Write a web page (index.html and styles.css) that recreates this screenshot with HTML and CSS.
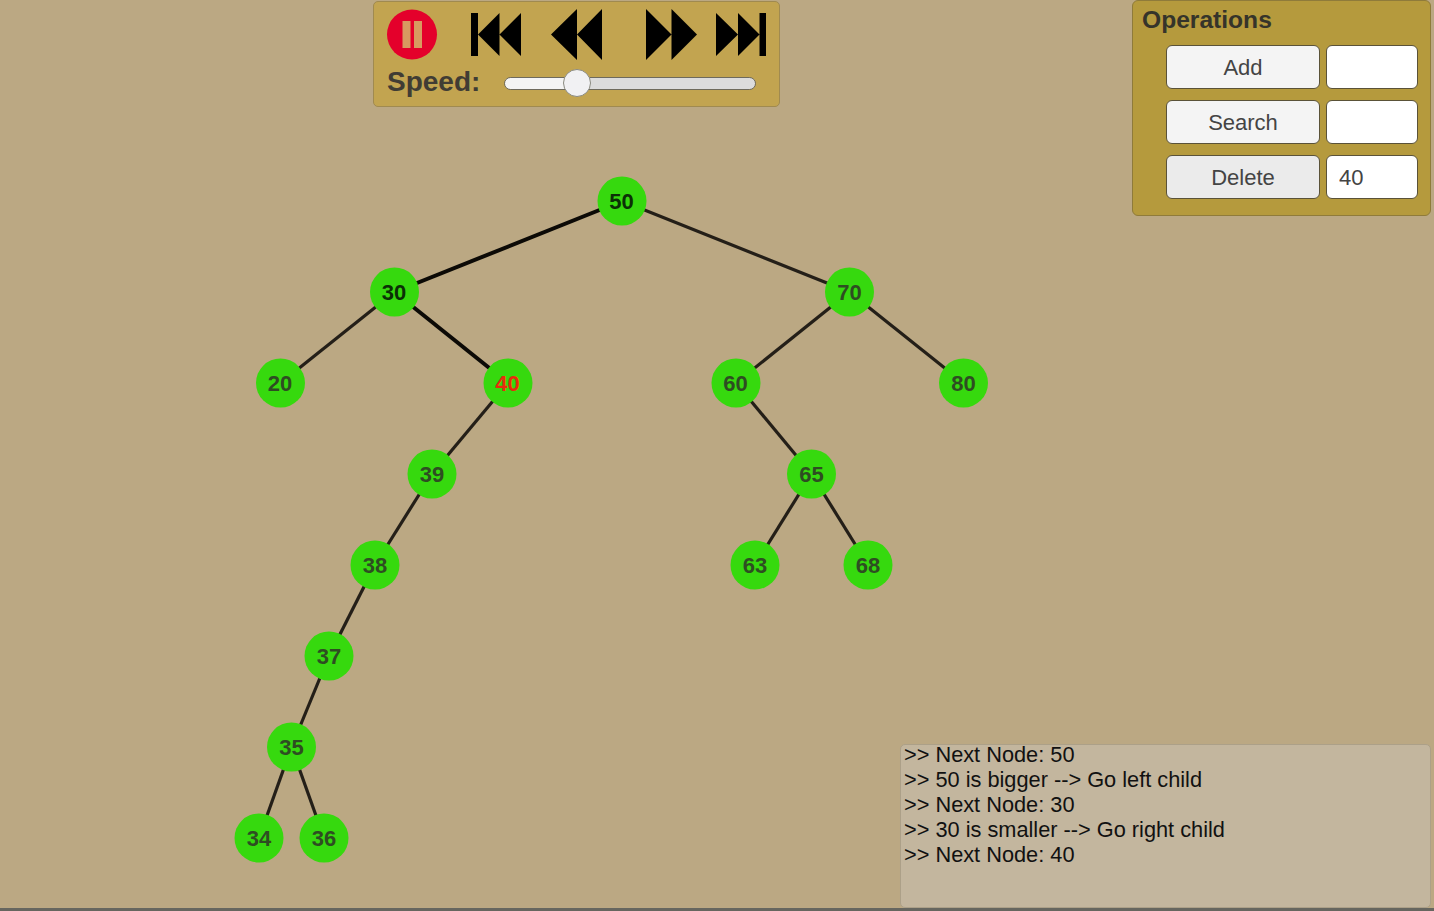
FILE: index.html
```html
<!DOCTYPE html>
<html lang="en">
<head>
    <meta charset="UTF-8">
    <meta name="viewport" content="width=device-width, initial-scale=1.0">
    <title>Binary Search Tree</title>
    <link rel="stylesheet" href="styles.css">
</head>
<body>
    <!-- Tree canvas, sits behind the panels -->
    <svg class="tree" width="1434" height="911" viewBox="0 0 1434 911">
        <g class="edges">
            <line class="edge-dark" x1="622" y1="201" x2="394.5" y2="292"/>
            <line class="edge-dark" x1="394.5" y1="292" x2="508" y2="383"/>
            <line x1="622" y1="201" x2="849.5" y2="292"/>
            <line x1="394.5" y1="292" x2="280.5" y2="383"/>
            <line x1="849.5" y1="292" x2="736" y2="383"/>
            <line x1="849.5" y1="292" x2="963.5" y2="383"/>
            <line x1="508" y1="383" x2="432" y2="474"/>
            <line x1="736" y1="383" x2="811.5" y2="474"/>
            <line x1="432" y1="474" x2="375" y2="565"/>
            <line x1="811.5" y1="474" x2="755" y2="565"/>
            <line x1="811.5" y1="474" x2="868" y2="565"/>
            <line x1="375" y1="565" x2="329" y2="656"/>
            <line x1="329" y1="656" x2="291.5" y2="747"/>
            <line x1="291.5" y1="747" x2="259" y2="838"/>
            <line x1="291.5" y1="747" x2="324" y2="838"/>
        </g>
        <g class="nodes">
            <circle cx="622" cy="201" r="24.5"/>
            <circle cx="394.5" cy="292" r="24.5"/>
            <circle cx="849.5" cy="292" r="24.5"/>
            <circle cx="280.5" cy="383" r="24.5"/>
            <circle cx="508" cy="383" r="24.5"/>
            <circle cx="736" cy="383" r="24.5"/>
            <circle cx="963.5" cy="383" r="24.5"/>
            <circle cx="432" cy="474" r="24.5"/>
            <circle cx="811.5" cy="474" r="24.5"/>
            <circle cx="375" cy="565" r="24.5"/>
            <circle cx="755" cy="565" r="24.5"/>
            <circle cx="868" cy="565" r="24.5"/>
            <circle cx="329" cy="656" r="24.5"/>
            <circle cx="291.5" cy="747" r="24.5"/>
            <circle cx="259" cy="838" r="24.5"/>
            <circle cx="324" cy="838" r="24.5"/>
        </g>
        <g class="labels">
            <text class="visited" x="621.5" y="209">50</text>
            <text class="visited" x="394" y="300">30</text>
            <text x="849.5" y="300">70</text>
            <text x="280" y="391">20</text>
            <text class="current" x="507.5" y="391">40</text>
            <text x="735.5" y="391">60</text>
            <text x="963.5" y="391">80</text>
            <text x="432" y="482">39</text>
            <text x="811.5" y="482">65</text>
            <text x="375" y="573">38</text>
            <text x="755" y="573">63</text>
            <text x="868" y="573">68</text>
            <text x="329" y="664">37</text>
            <text x="291.5" y="755">35</text>
            <text x="259" y="846">34</text>
            <text x="324" y="846">36</text>
        </g>
    </svg>

    <div class="top-row">
        <div class="player">
            <div class="player-icons">
                <svg width="394" height="60" viewBox="387 6 394 60">
                    <circle class="pause-bg" cx="412" cy="34.5" r="25"/>
                    <rect class="pause-bar" x="402.5" y="21" width="8" height="27"/>
                    <rect class="pause-bar" x="414" y="21" width="8" height="27"/>
                    <path d="M471 13h7v43h-7z M478 34.5 L499.5 13V56z M499.5 34.5 L521 13V56z"/>
                    <path d="M551 34.5 L577 9V60z M577 34.5 L602 9V60z"/>
                    <path d="M646 9 L671.5 34.5 L646 60z M671.5 9 L697 34.5 L671.5 60z"/>
                    <path d="M716 13 L738 34.5 L716 56z M738 13 L759.5 34.5 L738 56z M759.5 13h6.5v43h-6.5z"/>
                </svg>
            </div>
            <div class="speed-row">
                <span class="speed-label">Speed:</span>
                <input class="speed-slider" type="range" min="0" max="100" step="0.1" value="26">
            </div>
        </div>

        <div class="operations">
            <h2>Operations</h2>
            <div class="op-grid">
                <button>Add</button>
                <input type="text">
                <button>Search</button>
                <input type="text">
                <button class="pressed">Delete</button>
                <input type="text" value="40">
            </div>
        </div>
    </div>

    <div class="bottom-row">
        <div class="log">
            <div>&gt;&gt; Next Node: 50</div>
            <div>&gt;&gt; 50 is bigger --&gt; Go left child</div>
            <div>&gt;&gt; Next Node: 30</div>
            <div>&gt;&gt; 30 is smaller --&gt; Go right child</div>
            <div>&gt;&gt; Next Node: 40</div>
        </div>
    </div>
</body>
</html>
```
FILE: styles.css
```css
body {
    margin: 0;
    box-sizing: border-box;
    height: 911px;
    padding: 0 3px 0 0;
    overflow: hidden;
    position: relative;
    display: flex;
    flex-direction: column;
    justify-content: space-between;
    font-family: "Liberation Sans", Arial, sans-serif;
    background: #bba883;
    border-bottom: 3px solid #66665f;
}

.tree {
    position: absolute;
    top: 0;
    left: 0;
}

.edges line {
    stroke: #241f18;
    stroke-width: 3.2;
}

.edges .edge-dark {
    stroke: #0c0a06;
    stroke-width: 4;
}

.nodes circle {
    fill: #36d90e;
}

.labels text {
    font-size: 22px;
    font-weight: bold;
    text-anchor: middle;
    fill: #2e4d22;
}

.labels .visited {
    fill: #0b3006;
}

.labels .current {
    fill: #e82c0c;
}

/* Panels */
.top-row {
    position: relative;
    display: flex;
    justify-content: space-between;
    align-items: flex-start;
    padding-left: 373px;
}

.player {
    box-sizing: border-box;
    width: 407px;
    height: 106px;
    margin-top: 1px;
    padding: 4px 0 0 13px;
    background: #c2a450;
    border: 1px solid #a08a50;
    border-radius: 5px;
}

.player-icons svg {
    display: block;
}

.player-icons path {
    fill: #000;
}

.pause-bg {
    fill: #e4002b;
}

.pause-bar {
    fill: #d89a60;
}

.speed-row {
    display: flex;
    align-items: center;
}

.speed-label {
    font-size: 28px;
    font-weight: bold;
    color: #403c34;
    width: 117px;
}

.speed-slider {
    -webkit-appearance: none;
    appearance: none;
    width: 252px;
    height: 28px;
    margin: 2px 0 0;
    background: transparent;
}

.speed-slider::-webkit-slider-runnable-track {
    height: 13px;
    box-sizing: border-box;
    border: 1px solid #6e6a5c;
    border-radius: 7px;
    background: linear-gradient(to right, #f4f4f4 29%, #dcdcdc 29%);
}

.speed-slider::-webkit-slider-thumb {
    -webkit-appearance: none;
    width: 28px;
    height: 28px;
    margin-top: -9px;
    box-sizing: border-box;
    border: 1px solid #8a8a80;
    border-radius: 50%;
    background: #f1f1f3;
}

.operations {
    box-sizing: border-box;
    width: 299px;
    height: 216px;
    padding: 6px 12px 0 9px;
    background: #b59a3d;
    border: 1px solid #8f7b3a;
    border-radius: 6px;
}

.operations h2 {
    margin: 0;
    font-size: 24.6px;
    line-height: 26px;
    font-weight: bold;
    color: #35342a;
}

.op-grid {
    display: grid;
    grid-template-columns: 154px 92px;
    grid-auto-rows: 44px;
    column-gap: 6px;
    row-gap: 11px;
    margin: 12px 0 0 24px;
}

.op-grid button,
.op-grid input {
    box-sizing: border-box;
    margin: 0;
    height: 44px;
    font-family: inherit;
    font-size: 22px;
    color: #444;
    border: 1px solid #5a5238;
    border-radius: 6px;
}

.op-grid button {
    padding: 2px 0 0;
    background: #f4f4f4;
}

.op-grid button.pressed {
    background: #ebebeb;
}

.op-grid input {
    width: 92px;
    padding: 2px 12px 0;
    background: #fff;
    outline: none;
}

.bottom-row {
    position: relative;
    display: flex;
    justify-content: flex-end;
}

.log {
    box-sizing: border-box;
    width: 531px;
    height: 164px;
    padding: 0 0 0 3px;
    background: #c3b69e;
    border: 1px solid #aca088;
    border-radius: 5px;
    font-size: 21.75px;
    line-height: 25px;
    color: #111;
}

.log div:first-child {
    line-height: 20px;
    margin-bottom: 2px;
}
```
